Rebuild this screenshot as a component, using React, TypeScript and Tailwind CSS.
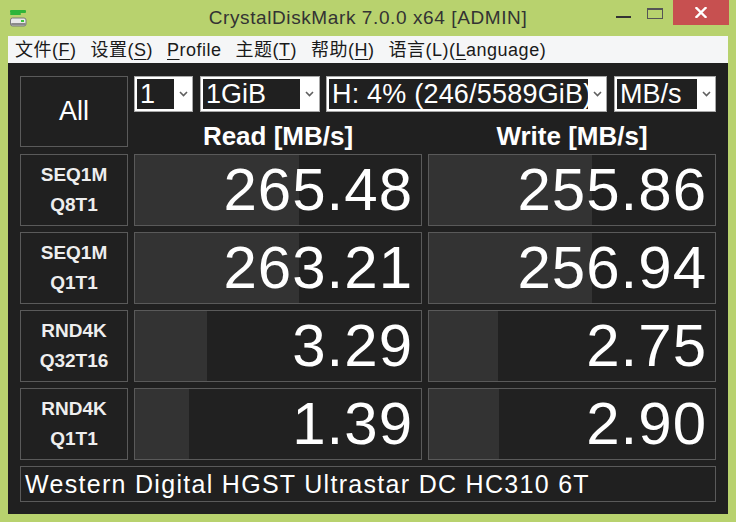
import React from "react";

type Row = {
  l1: string;
  l2: string;
  read: string;
  readFill: number;
  write: string;
  writeFill: number;
};

const rows: Row[] = [
  { l1: "SEQ1M", l2: "Q8T1", read: "265.48", readFill: 164, write: "255.86", writeFill: 163 },
  { l1: "SEQ1M", l2: "Q1T1", read: "263.21", readFill: 164, write: "256.94", writeFill: 163 },
  { l1: "RND4K", l2: "Q32T16", read: "3.29", readFill: 72, write: "2.75", writeFill: 69 },
  { l1: "RND4K", l2: "Q1T1", read: "1.39", readFill: 54, write: "2.90", writeFill: 70 },
];

const font = { fontFamily: '"Liberation Sans", Arial, "Noto Sans CJK SC", sans-serif' };
const menuFont = { fontFamily: '"Liberation Sans", "Noto Sans CJK SC", sans-serif' };

function Chevron() {
  return (
    <svg width="9" height="6" viewBox="0 0 9 6" className="shrink-0">
      <polyline points="1,1 4.5,4.5 8,1" fill="none" stroke="#606060" strokeWidth="1.6" />
    </svg>
  );
}

function Combo({ text, w, sel, extra = "" }: { text: string; w: string; sel: string; extra?: string }) {
  return (
    <div className={`${w} ${extra} h-[36px] flex items-center bg-white border border-[#a8a8a8] pl-[2px] py-[2px]`}>
      <div
        className={`${sel} h-full bg-[#202020] text-white text-[27px] leading-none flex items-center pl-[3px] overflow-hidden whitespace-nowrap`}
        style={font}
      >
        {text}
      </div>
      <div className="flex-1 flex justify-center">
        <Chevron />
      </div>
    </div>
  );
}

function Meter({ value, fill }: { value: string; fill: number }) {
  return (
    <div className="relative h-[72px] border border-[#5a5a5a] bg-[#212121] flex items-center justify-end pr-[8px]">
      <div className="absolute left-0 top-0 bottom-0 bg-[#333333]" style={{ width: fill }} />
      <span className="relative text-white text-[60px] leading-none tracking-[1px]" style={font}>
        {value}
      </span>
    </div>
  );
}

function MenuItem({ pre, u, post }: { pre: string; u: string; post: string }) {
  return (
    <span className="whitespace-pre">
      {pre}
      <span className="underline underline-offset-[3px] decoration-1">{u}</span>
      {post}
    </span>
  );
}

export default function App() {
  return (
    <div className="w-[736px] h-[522px] bg-[#b8d26e] flex flex-col overflow-hidden">
      {/* title bar */}
      <div className="relative h-[36px] shrink-0">
        <svg className="absolute left-[10px] top-[10px]" width="17" height="17" viewBox="0 0 17 17">
          <rect x="0" y="0" width="16" height="3" rx="1" fill="#2fb53a" />
          <rect x="0" y="3" width="11" height="2" rx="1" fill="#2fb53a" />
          <rect x="0.5" y="8" width="15.5" height="8" rx="2" fill="#e8e8e8" stroke="#7a7a7a" />
          <rect x="1" y="13" width="15" height="2.5" rx="1" fill="#8a8a8a" />
          <rect x="11" y="10" width="3" height="2" fill="#3cc43c" />
        </svg>
        <div
          className="absolute inset-x-0 top-[6px] text-center text-[19px] leading-[24px] tracking-[0.6px] text-[#333333]"
          style={font}
        >
          CrystalDiskMark 7.0.0 x64 [ADMIN]
        </div>
        <div className="absolute left-[616px] top-[16px] w-[15px] h-[2px] bg-[#333333]" />
        <div className="absolute left-[647px] top-[8px] w-[16px] h-[11px] border border-[#555555] border-t-[2px]" />
        <div className="absolute left-[673px] top-0 w-[56px] h-[25px] bg-[#c75050] flex items-center justify-center">
          <svg width="12" height="11" viewBox="0 0 12 11">
            <path d="M1.5 1 L10.5 10 M10.5 1 L1.5 10" stroke="#ffffff" strokeWidth="2.4" strokeLinecap="square" />
          </svg>
        </div>
      </div>

      {/* client */}
      <div className="flex-1 mx-[8px] mb-[8px] flex flex-col">
        <div
          className="h-[27px] shrink-0 bg-[#f5f6f7] flex items-center gap-[14px] pl-[7px] text-[18px] leading-none tracking-[0.5px] text-[#1a1a1a]"
          style={menuFont}
        >
          <MenuItem pre="文件(" u="F" post=")" />
          <MenuItem pre="设置(" u="S" post=")" />
          <MenuItem pre="" u="P" post="rofile" />
          <MenuItem pre="主题(" u="T" post=")" />
          <MenuItem pre="帮助(" u="H" post=")" />
          <MenuItem pre="语言(L)(" u="L" post="anguage)" />
        </div>

        <div className="flex-1 bg-[#202020] pl-[12px] pt-[13px]">
          <div className="grid grid-cols-[108px_288px_288px] gap-x-[6px]">
            <div
              className="h-[71px] border border-[#5a5a5a] flex items-center justify-center text-white text-[27px] leading-none"
              style={font}
            >
              All
            </div>
            <div className="col-span-2 flex flex-col">
              <div className="flex gap-[6px]">
                <Combo text="1" w="w-[59px]" sel="w-[37px]" />
                <Combo text="1GiB" w="w-[120px]" sel="w-[97px]" extra="ml-[1px]" />
                <Combo text="H: 4% (246/5589GiB)" w="w-[281px] tracking-[0.2px]" sel="w-[259px]" />
                <Combo text="MB/s" w="w-[102px]" sel="w-[80px]" extra="ml-[1px]" />
              </div>
              <div className="grid grid-cols-[288px_288px] gap-x-[6px] h-[35px] pt-[11px]">
                <div className="text-center text-white text-[26px] font-bold leading-none" style={font}>
                  Read [MB/s]
                </div>
                <div className="text-center text-white text-[26px] font-bold leading-none" style={font}>
                  Write [MB/s]
                </div>
              </div>
            </div>
          </div>

          <div className="mt-[7px] flex flex-col gap-[6px]">
            {rows.map((r, i) => (
              <div key={i} className="grid grid-cols-[108px_288px_288px] gap-x-[6px]">
                <div
                  className="h-[72px] border border-[#5a5a5a] flex flex-col items-center justify-center text-[#eeeeee] text-[19px] font-bold leading-[30px]"
                  style={font}
                >
                  <span>{r.l1}</span>
                  <span>{r.l2}</span>
                </div>
                <Meter value={r.read} fill={r.readFill} />
                <Meter value={r.write} fill={r.writeFill} />
              </div>
            ))}
            <div
              className="w-[696px] h-[36px] border border-[#5a5a5a] flex items-center pl-[4px] text-white text-[25px] leading-none tracking-[1.3px]"
              style={font}
            >
              Western Digital HGST Ultrastar DC HC310 6T
            </div>
          </div>
        </div>
      </div>
    </div>
  );
}
